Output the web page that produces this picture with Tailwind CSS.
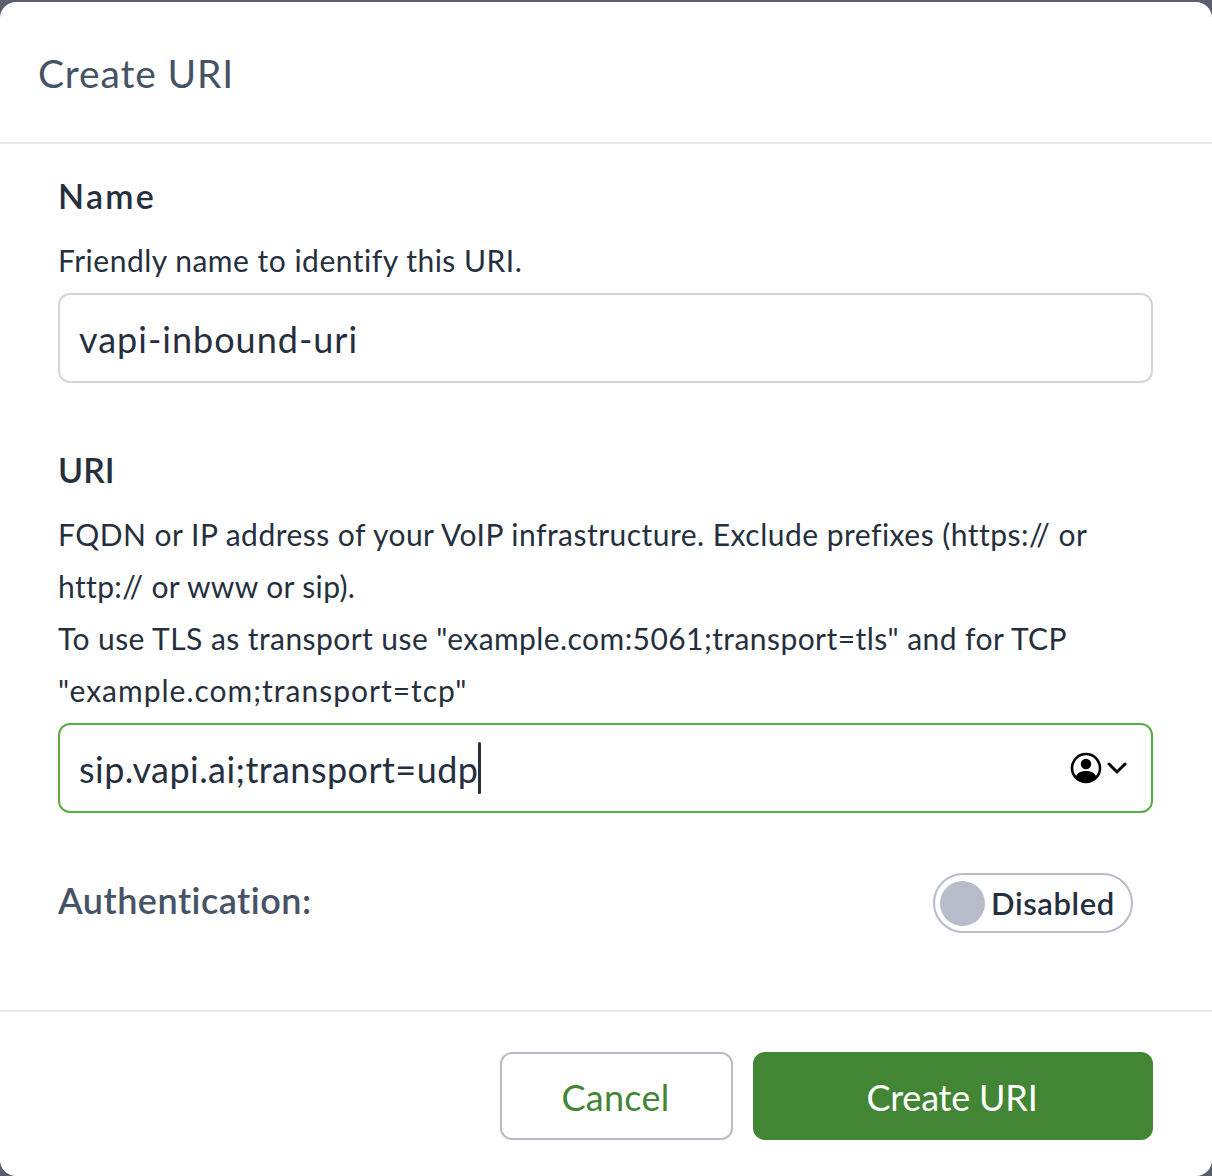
<!DOCTYPE html>
<html lang="en">
<head>
<meta charset="utf-8">
<title>Create URI</title>
<script src="https://cdn.jsdelivr.net/npm/@tailwindcss/browser@4"></script>
</head>
<body class="bg-[#5b5e6c] font-['Lato','Noto_Sans',sans-serif]">
<div class="w-[1212px] h-[1176px] pt-[2px] overflow-hidden">
  <div class="w-full h-[1174px] bg-white rounded-[16px] flex flex-col">
    <header class="h-[142px] shrink-0 border-b-2 border-[#e9ebf0] flex items-center pl-[38px] pt-[2px]">
      <h1 class="text-[39px] leading-[48px] text-[#465266] tracking-[0.85px]">Create URI</h1>
    </header>
    <main class="flex-1 px-[58px] pt-[32px]">
      <section>
        <h2 class="text-[34px] leading-[40px] font-semibold text-[#252f3e] tracking-[2.3px]">Name</h2>
        <p class="mt-[18px] text-[30px] leading-[52px] text-[#252f3e] tracking-[0.5px]">Friendly name to identify this URI.</p>
        <div class="mt-[7px] h-[90px] w-[1095px] border-2 border-[#d3d5db] rounded-[12px] flex items-center pl-[19px] text-[36px] text-[#252f3e] tracking-[1px]"><span class="mt-[1px]">vapi-inbound-uri</span></div>
      </section>
      <section class="mt-[67px]">
        <h2 class="text-[34px] leading-[40px] font-semibold text-[#252f3e] tracking-[0px]">URI</h2>
        <p class="mt-[18px] text-[30px] leading-[52px] text-[#252f3e]"><span class="tracking-[0.48px]">FQDN or IP address of your VoIP infrastructure. Exclude prefixes (https:// or</span><br><span class="tracking-[0.37px]">http:// or www or sip).</span><br><span class="tracking-[0.43px]">To use TLS as transport use "example.com:5061;transport=tls" and for TCP</span><br><span class="tracking-[1px]">"example.com;transport=tcp"</span></p>
        <div class="mt-[7px] h-[90px] w-[1095px] border-2 border-[#58ad48] rounded-[12px] flex items-center pl-[19px] pr-[24px] text-[36px] text-[#252f3e] tracking-[0.45px]">
          <span class="mt-[1px]">sip.vapi.ai;transport=udp</span>
          <span class="w-[3px] h-[52px] bg-[#252f3e] rounded-full"></span>
          <span class="ml-auto flex items-center gap-[5px]">
            <svg width="32" height="32" viewBox="0 0 32 32" fill="none">
              <circle cx="16" cy="16" r="14" stroke="#000" stroke-width="2.6"/>
              <circle cx="16" cy="12" r="5.2" fill="#000"/>
              <path d="M5.5 25c2-4.5 6-6 10.500-6s8.500 1.500 10.500 6c-2.500 3-6 4.500-10.500 4.500S8 28 5.500 25z" fill="#000"/>
            </svg>
            <svg width="20" height="14" viewBox="0 0 20 14" fill="none">
              <path d="M2 3l8 8 8-8" stroke="#000" stroke-width="3" stroke-linecap="round" stroke-linejoin="round"/>
            </svg>
          </span>
        </div>
      </section>
      <section class="mt-[60px] flex items-center justify-between pr-[21px]">
        <span class="mb-[6px] text-[36px] leading-[44px] font-semibold text-[#465266] tracking-[0.5px]">Authentication:</span>
        <span class="w-[200px] h-[60px] border-2 border-[#b7bccb] rounded-full flex items-center pl-[5px]">
          <span class="w-[45px] h-[45px] rounded-full bg-[#b7bccb]"></span>
          <span class="ml-[6px] text-[31px] font-semibold text-[#252f3e] tracking-[0.6px]">Disabled</span>
        </span>
      </section>
    </main>
    <footer class="h-[166px] shrink-0 border-t-2 border-[#e9ebf0] flex justify-end gap-[20px] pt-[40px] pr-[59px]">
      <button class="w-[233px] h-[88px] pt-[2px] pr-[2px] border-2 border-[#b7bccb] rounded-[12px] bg-white text-[36px] text-[#428535] tracking-[0.3px]">Cancel</button>
      <button class="w-[400px] h-[88px] pt-[2px] pr-[2px] rounded-[12px] bg-[#428535] text-[36px] text-white tracking-[-0.2px]">Create URI</button>
    </footer>
  </div>
</div>
</body>
</html>
